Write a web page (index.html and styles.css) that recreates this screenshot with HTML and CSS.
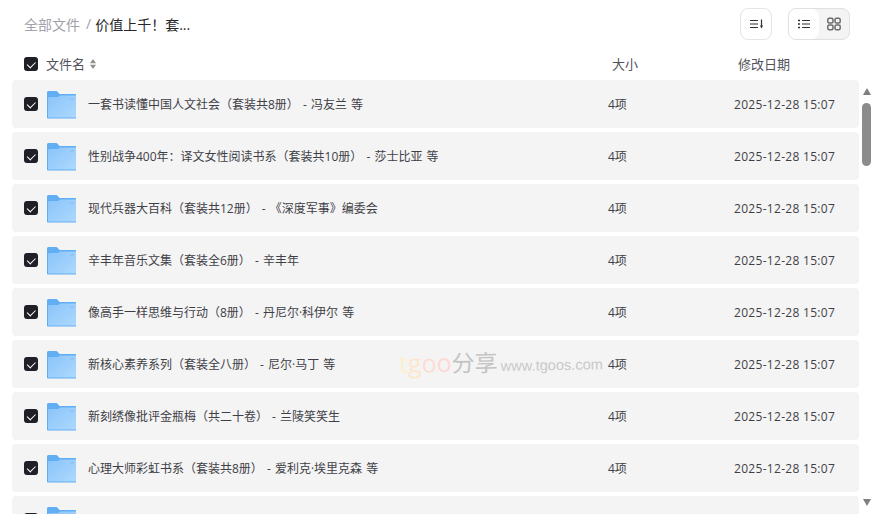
FILE: index.html
```html
<!DOCTYPE html>
<html lang="zh-CN">
<head>
    <meta charset="UTF-8">
    <meta name="viewport" content="width=device-width, initial-scale=1.0">
    <title>全部文件</title>
    <link rel="stylesheet" href="styles.css">
</head>
<body>

<svg class="defs" width="0" height="0">
    <defs>
        <linearGradient id="folderFront" x1="0" y1="0" x2="1" y2="1">
            <stop offset="0" stop-color="#8ac5fa"/>
            <stop offset="1" stop-color="#add8fd"/>
        </linearGradient>
        <symbol id="folder" viewBox="0 0 30 30">
            <path d="M0 3.500C0 2.700.7 2 1.500 2H9c.8 0 1.300.3 1.800.9L12.500 5H28c.6 0 1 .4 1 1v23.500H1c-.6 0-1-.4-1-1z" fill="#62aef2"/>
            <path d="M1 9.500c0-.8.7-1.500 1.500-1.500H11l2-1.500h16V28.500H1z" fill="url(#folderFront)"/>
            <rect x="23" y="9" width="4" height="2" fill="#8fc6f8"/>
        </symbol>
    </defs>
</svg>

<div class="page">
    <div class="topbar">
        <div class="crumbs">
            <span class="crumb-root">全部文件</span>
            <span class="crumb-sep">/</span>
            <span class="crumb-current">价值上千！套...</span>
        </div>
        <div class="tools">
            <button class="tool-btn">
                <svg width="16" height="16" viewBox="0 0 16 16" fill="none" stroke="#333" stroke-width="1.100">
                    <path d="M2 4.500h8M2 8h8M2 11.500h8"/>
                    <path d="M13.500 3.500v8" stroke-width="1.200"/>
                    <path d="M12 9.500h3L13.500 12.500z" fill="#333" stroke="none"/>
                </svg>
            </button>
            <div class="view-switch">
                <button class="view-btn active">
                    <svg width="14" height="14" viewBox="0 0 14 14" fill="none" stroke="#333" stroke-width="1.100">
                        <path d="M5 3.500H13M5 7H13M5 10.500H13"/>
                        <path d="M1 3.500h2M1 7h2M1 10.500h2" stroke-width="1.300"/>
                    </svg>
                </button>
                <button class="view-btn">
                    <svg width="14" height="14" viewBox="0 0 14 14" fill="none" stroke="#6b6b6b" stroke-width="1.500">
                        <rect x=".8" y="1.200" width="5.200" height="4.800" rx="1.500"/>
                        <rect x="8" y="1.200" width="5.200" height="4.800" rx="1.500"/>
                        <rect x=".8" y="8" width="5.200" height="4.800" rx="1.500"/>
                        <rect x="8" y="8" width="5.200" height="4.800" rx="1.500"/>
                    </svg>
                </button>
            </div>
        </div>
    </div>

    <div class="table-head">
        <span class="check"></span>
        <span class="col-name"><span class="head-text">文件名</span>
            <svg class="sort" width="6" height="10" viewBox="0 0 6 10" fill="#8f8f8f"><path d="M3 0L6 4.200H0z"/><path d="M3 10L0 5.800H6z"/></svg>
        </span>
        <span class="col-size"><span class="head-text">大小</span></span>
        <span class="col-date"><span class="head-text">修改日期</span></span>
    </div>

    <div class="body-wrap">
        <div class="list">
            <div class="row">
                <span class="check"></span>
                <svg class="folder"><use href="#folder"/></svg>
                <span class="name">一套书读懂中国人文社会（套装共8册） - 冯友兰 等</span>
                <span class="size">4项</span>
                <span class="date">2025-12-28 15:07</span>
            </div>
            <div class="row">
                <span class="check"></span>
                <svg class="folder"><use href="#folder"/></svg>
                <span class="name">性别战争400年：译文女性阅读书系（套装共10册） - 莎士比亚 等</span>
                <span class="size">4项</span>
                <span class="date">2025-12-28 15:07</span>
            </div>
            <div class="row">
                <span class="check"></span>
                <svg class="folder"><use href="#folder"/></svg>
                <span class="name">现代兵器大百科（套装共12册） - 《深度军事》编委会</span>
                <span class="size">4项</span>
                <span class="date">2025-12-28 15:07</span>
            </div>
            <div class="row">
                <span class="check"></span>
                <svg class="folder"><use href="#folder"/></svg>
                <span class="name">辛丰年音乐文集（套装全6册） - 辛丰年</span>
                <span class="size">4项</span>
                <span class="date">2025-12-28 15:07</span>
            </div>
            <div class="row">
                <span class="check"></span>
                <svg class="folder"><use href="#folder"/></svg>
                <span class="name">像高手一样思维与行动（8册） - 丹尼尔·科伊尔 等</span>
                <span class="size">4项</span>
                <span class="date">2025-12-28 15:07</span>
            </div>
            <div class="row">
                <span class="check"></span>
                <svg class="folder"><use href="#folder"/></svg>
                <span class="name">新核心素养系列（套装全八册） - 尼尔·马丁 等</span>
                <span class="size">4项</span>
                <span class="date">2025-12-28 15:07</span>
            </div>
            <div class="row">
                <span class="check"></span>
                <svg class="folder"><use href="#folder"/></svg>
                <span class="name">新刻绣像批评金瓶梅（共二十卷） - 兰陵笑笑生</span>
                <span class="size">4项</span>
                <span class="date">2025-12-28 15:07</span>
            </div>
            <div class="row">
                <span class="check"></span>
                <svg class="folder"><use href="#folder"/></svg>
                <span class="name">心理大师彩虹书系（套装共8册） - 爱利克·埃里克森 等</span>
                <span class="size">4项</span>
                <span class="date">2025-12-28 15:07</span>
            </div>
            <div class="row">
                <span class="check"></span>
                <svg class="folder"><use href="#folder"/></svg>
            </div>
        </div>
        <div class="scrollbar">
            <span class="arrow-up"></span>
            <span class="thumb"></span>
            <span class="arrow-down"></span>
        </div>
    </div>

    <div class="watermark"><span class="wm-t">t</span><span class="wm-g">g</span><span class="wm-o1">o</span><span class="wm-o2">o</span><span class="wm-cn">分享</span><span class="wm-url">www.tgoos.com</span></div>
</div>

</body>
</html>
```

FILE: styles.css
```css
* {
    box-sizing: border-box;
}
html, body {
    margin: 0;
    height: 100%;
    overflow: hidden;
}
body {
    font-family: "Open Sans", "Noto Sans CJK SC", sans-serif;
    background-color: #ffffff;
    color: #3f3f46;
}
.defs {
    position: absolute;
}
.page {
    position: relative;
    height: 514px;
    display: flex;
    flex-direction: column;
}
.topbar {
    height: 48px;
    display: flex;
    justify-content: space-between;
    align-items: center;
    padding: 0 24px;
}
.crumbs {
    font-size: 14px;
    display: flex;
    gap: 6px;
    margin-top: -1px;
}
.crumb-root {
    color: #a1a1aa;
}
.crumb-sep {
    color: #a1a1aa;
}
.crumb-current {
    color: #27272a;
    margin-left: -2px;
}
.tools {
    display: flex;
    gap: 16px;
}
.tool-btn {
    width: 32px;
    height: 32px;
    padding: 0;
    border: 1px solid #e4e4e7;
    border-radius: 8px;
    background-color: #ffffff;
    display: flex;
    align-items: center;
    justify-content: center;
}
.view-switch {
    width: 62px;
    height: 32px;
    display: flex;
    border: 1px solid #e0e0e3;
    border-radius: 8px;
    background-color: #f4f4f5;
    overflow: hidden;
}
.view-btn {
    flex: 1;
    padding: 0;
    border: none;
    background: none;
    display: flex;
    align-items: center;
    justify-content: center;
}
.view-btn.active {
    background-color: #ffffff;
    border-radius: 0 8px 8px 0;
}
.table-head {
    height: 32px;
    display: flex;
    align-items: center;
    padding-left: 24px;
    font-size: 13px;
    color: #52525b;
}
.head-text {
    display: block;
    margin-top: -2px;
}
.col-name {
    margin-left: 8px;
    width: 566px;
    display: flex;
    align-items: center;
    gap: 5px;
}
.col-size {
    width: 126px;
}
.check {
    flex: none;
    position: relative;
    width: 14px;
    height: 14px;
    border-radius: 3px;
    background-color: #1f2027;
}
.check::after {
    content: "";
    position: absolute;
    left: 5px;
    top: 3px;
    width: 4px;
    height: 6.500px;
    border: solid #ffffff;
    border-width: 0 1.800px 1.800px 0;
    transform: rotate(45deg);
}
.sort {
    flex: none;
    margin-top: -1px;
}
.body-wrap {
    flex: 1;
    min-height: 0;
    display: flex;
    padding-left: 12px;
}
.list {
    width: 847px;
    overflow: hidden;
    display: flex;
    flex-direction: column;
    gap: 4px;
}
.row {
    flex: none;
    height: 48px;
    display: flex;
    align-items: center;
    padding-left: 12px;
    background-color: #f4f4f5;
    border-radius: 4px;
    font-size: 12px;
    color: #3f3f46;
}
.folder {
    flex: none;
    width: 30px;
    height: 30px;
    margin: 0 11px 0 9px;
}
.name {
    width: 520px;
    word-spacing: 1px;
}
.size {
    width: 126px;
}
.date {
    letter-spacing: .3px;
}
.scrollbar {
    flex: none;
    width: 15px;
    display: flex;
    flex-direction: column;
    align-items: center;
    position: relative;
}
.arrow-up {
    margin-top: 8px;
    border: 4.500px solid transparent;
    border-top: none;
    border-bottom: 7px solid #7f7f7f;
}
.thumb {
    margin-top: 8px;
    width: 9px;
    height: 63px;
    border-radius: 4.500px;
    background-color: #8c8c8c;
}
.arrow-down {
    position: absolute;
    top: 419px;
    border: 4.500px solid transparent;
    border-bottom: none;
    border-top: 7px solid #7f7f7f;
}
.watermark {
    position: absolute;
    left: 399px;
    top: 344px;
    display: flex;
    align-items: baseline;
    font-size: 23px;
    transform: rotate(-1deg);
    pointer-events: none;
}
.wm-t {
    font-size: 25px;
    color: #fdf0cf;
}
.wm-g {
    font-size: 25px;
    color: #fde6c9;
}
.wm-o1 {
    font-size: 25px;
    color: #fddcd3;
}
.wm-o2 {
    font-size: 25px;
    color: #fdd8d4;
}
.wm-cn {
    color: #c4c4c4;
}
.wm-url {
    margin-left: 3px;
    font-family: "Liberation Sans", sans-serif;
    font-size: 14.600px;
    color: #c9c9c9;
}
```
